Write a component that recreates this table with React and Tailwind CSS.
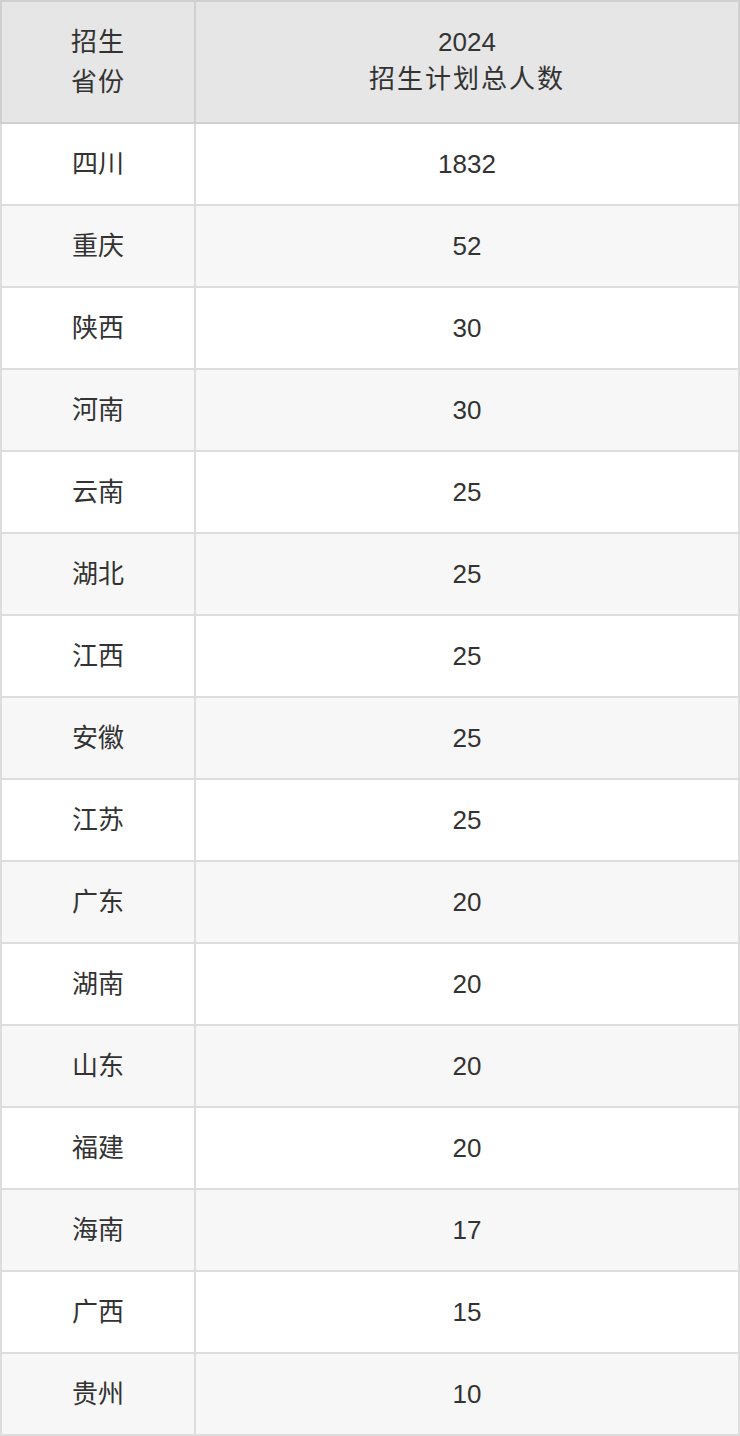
import React from 'react';

const rows = [
  ['四川', '1832'],
  ['重庆', '52'],
  ['陕西', '30'],
  ['河南', '30'],
  ['云南', '25'],
  ['湖北', '25'],
  ['江西', '25'],
  ['安徽', '25'],
  ['江苏', '25'],
  ['广东', '20'],
  ['湖南', '20'],
  ['山东', '20'],
  ['福建', '20'],
  ['海南', '17'],
  ['广西', '15'],
  ['贵州', '10'],
];

export default function App() {
  return (
    <div className="w-[740px] bg-white text-[#333] text-[26px] font-['Liberation_Sans','Noto_Sans_CJK_SC',sans-serif]">
      <table className="w-[740px] border-collapse table-fixed">
        <colgroup>
          <col className="w-[194px]" />
          <col />
        </colgroup>
        <thead>
          <tr className="h-[122px] bg-[#e6e6e6]">
            <th className="border-2 border-[#d0d0d0] font-normal text-center align-middle leading-[40px] tracking-[1px]">
              招生<br />省份
            </th>
            <th className="border-2 border-[#d0d0d0] font-normal text-center align-middle leading-[37px] pb-[2px]">
              2024<br /><span className="tracking-[2px]">招生计划总人数</span>
            </th>
          </tr>
        </thead>
        <tbody>
          {rows.map(([prov, n], i) => (
            <tr key={prov} className={i % 2 === 0 ? 'h-[82px] bg-white' : 'h-[82px] bg-[#f7f7f7]'}>
              <td className="border-2 border-[#dddddd] text-center align-middle">{prov}</td>
              <td className="border-2 border-[#dddddd] text-center align-middle">{n}</td>
            </tr>
          ))}
        </tbody>
      </table>
    </div>
  );
}
